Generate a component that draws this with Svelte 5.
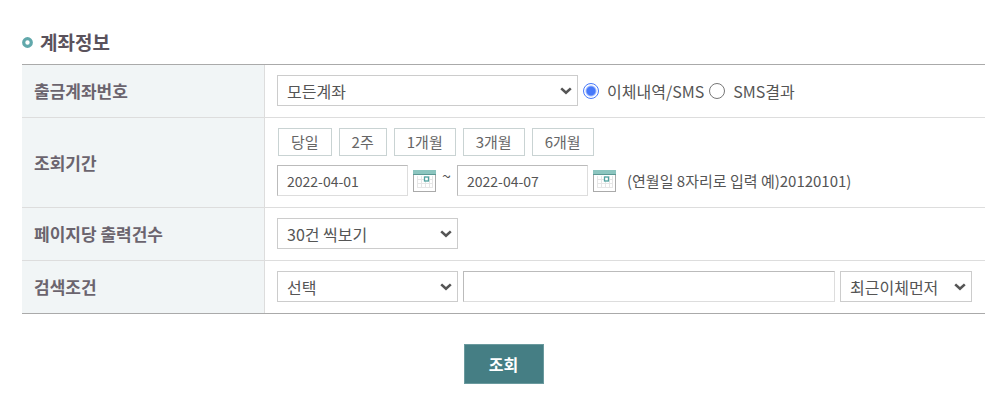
<script>
  // Account transfer lookup form: account, period, page size and search filters.
  const periods = ['당일', '2주', '1개월', '3개월', '6개월'];

  let account = $state('모든계좌');
  let resultType = $state('transfer');
  let startDate = $state('2022-04-01');
  let endDate = $state('2022-04-07');
  let pageSize = $state('30건 씩보기');
  let searchField = $state('선택');
  let keyword = $state('');
  let order = $state('최근이체먼저');
</script>

{#snippet chevron()}
  <svg class="chevron" viewBox="0 0 12 8" aria-hidden="true">
    <path d="M1.2 1.4 6 5.8l4.8-4.4" fill="none" stroke="#555" stroke-width="2.6" />
  </svg>
{/snippet}

{#snippet calendar(label)}
  <button type="button" class="calendar" aria-label={label}>
    <svg viewBox="0 0 23 22" aria-hidden="true">
      <rect x=".5" y=".5" width="22" height="21" fill="#fff" stroke="#aaa" />
      <path d="M4.5 6v12M8.5 6v12M12.5 6v12M16.5 6v12M19.5 6v12M4 9.5h16M4 13.5h16M4 17.5h16" stroke="#e6e6e6" />
      <rect width="23" height="4" fill="#8cc5bf" />
      <rect y="4" width="23" height="1" fill="#5c9994" />
      <rect x="11.5" y="7" width="4" height="4" fill="#fff" stroke="#4fa19f" stroke-width="1.3" />
    </svg>
  </button>
{/snippet}

<main>
  <h2>
    <svg class="bullet" viewBox="0 0 11 11" aria-hidden="true">
      <circle cx="5.5" cy="5.5" r="3.8" fill="none" stroke="#61a8ab" stroke-width="3.2" />
    </svg>
    계좌정보
  </h2>

  <form onsubmit={(event) => event.preventDefault()}>
    <table>
      <tbody>
        <tr>
          <th scope="row"><label for="account">출금계좌번호</label></th>
          <td>
            <div class="line">
              <span class="select wide">
                <select id="account" bind:value={account}>
                  <option>모든계좌</option>
                </select>
                {@render chevron()}
              </span>
              <label class="radio">
                <input type="radio" name="result" value="transfer" bind:group={resultType} />
                이체내역/SMS
              </label>
              <label class="radio">
                <input type="radio" name="result" value="sms" bind:group={resultType} />
                SMS결과
              </label>
            </div>
          </td>
        </tr>
        <tr>
          <th scope="row">조회기간</th>
          <td>
            <div class="periods">
              {#each periods as period}
                <button type="button" class="period">{period}</button>
              {/each}
            </div>
            <div class="line">
              <input class="text date" type="text" aria-label="조회 시작일" bind:value={startDate} />
              {@render calendar('시작일 선택')}
              <span class="tilde">~</span>
              <input class="text date" type="text" aria-label="조회 종료일" bind:value={endDate} />
              {@render calendar('종료일 선택')}
              <span class="hint">(연월일 8자리로 입력 예)20120101)</span>
            </div>
          </td>
        </tr>
        <tr>
          <th scope="row"><label for="page-size">페이지당 출력건수</label></th>
          <td>
            <span class="select medium">
              <select id="page-size" bind:value={pageSize}>
                <option>30건 씩보기</option>
              </select>
              {@render chevron()}
            </span>
          </td>
        </tr>
        <tr>
          <th scope="row"><label for="search-field">검색조건</label></th>
          <td>
            <div class="line">
              <span class="select medium">
                <select id="search-field" bind:value={searchField}>
                  <option>선택</option>
                </select>
                {@render chevron()}
              </span>
              <input class="text keyword" type="text" aria-label="검색어" bind:value={keyword} />
              <span class="select narrow">
                <select aria-label="정렬 순서" bind:value={order}>
                  <option>최근이체먼저</option>
                </select>
                {@render chevron()}
              </span>
            </div>
          </td>
        </tr>
      </tbody>
    </table>

    <button type="submit" class="submit">조회</button>
  </form>
</main>

<style>
  :global(body) {
    margin: 0;
    background: #fff;
  }

  main {
    padding: 28px 19px 20px 22px;
    color: #555;
    font-family: 'Noto Sans CJK KR', sans-serif;
    font-size: 16px;
    line-height: 20px;
  }

  input,
  select,
  button {
    box-sizing: border-box;
    margin: 0;
    color: inherit;
    font-family: inherit;
  }

  h2 {
    display: flex;
    align-items: center;
    gap: 7px;
    margin: 0 0 8px;
    color: #5a525c;
    font-size: 19px;
    font-weight: 700;
    line-height: 28px;
  }

  .bullet {
    width: 11px;
    height: 11px;
  }

  table {
    width: 100%;
    border-top: 1px solid #aaa;
    border-bottom: 1px solid #aaa;
    border-spacing: 0;
  }

  th,
  td {
    border-bottom: 1px solid #ddd;
  }

  tr:last-child > * {
    border-bottom: 0;
  }

  th {
    box-sizing: border-box;
    width: 243px;
    padding: 0 12px;
    border-right: 1px solid #ddd;
    background: #f1f5f6;
    color: #6b646e;
    font-size: 17px;
    font-weight: 700;
    text-align: left;
    white-space: nowrap;
  }

  td {
    padding: 10px 13px 11px 12px;
  }

  .line,
  .periods {
    display: flex;
    align-items: center;
    gap: 5px;
  }

  .periods {
    gap: 7px;
    margin-bottom: 9px;
    padding-left: 1px;
  }

  .period {
    height: 28px;
    padding: 0 12px;
    border: 1px solid #c9d3d3;
    background: #fff;
    color: #666;
    font-size: 15px;
    line-height: 20px;
  }

  .select {
    position: relative;
    display: block;
    flex: none;
  }

  .wide {
    width: 301px;
  }

  .medium {
    width: 181px;
  }

  .narrow {
    width: 132px;
  }

  select {
    display: block;
    width: 100%;
    height: 31px;
    padding: 0 20px 0 9px;
    border: 1px solid #ccc;
    border-radius: 0;
    background: #fff;
    font-size: 16px;
    appearance: none;
  }

  /* Drawn arrow laid over the native select */
  .chevron {
    position: absolute;
    top: 12px;
    right: 6px;
    width: 12px;
    height: 8px;
    pointer-events: none;
  }

  .radio {
    display: flex;
    align-items: center;
    gap: 8px;
    white-space: nowrap;
  }

  input[type='radio'] {
    width: 16px;
    height: 16px;
    border: 1px solid #777;
    border-radius: 50%;
    background: #fff;
    appearance: none;
  }

  input[type='radio']:checked {
    border-color: #4779fa;
    background: radial-gradient(circle, #4779fa 4px, #fff 6px);
  }

  .text {
    height: 31px;
    padding: 0 9px;
    border: 1px solid #ddd;
    border-top-color: #bbb;
    border-left-color: #bbb;
    border-radius: 0;
    background: #fff;
    font-size: 14px;
  }

  .date {
    width: 131px;
  }

  .keyword {
    flex: 1;
    min-width: 0;
  }

  .calendar {
    width: 23px;
    height: 22px;
    padding: 0;
    border: 0;
    background: none;
  }

  .calendar svg {
    display: block;
    width: 23px;
    height: 22px;
  }

  .tilde {
    align-self: flex-start;
    width: 11px;
    text-align: center;
  }

  .hint {
    margin-left: 6px;
    font-size: 15px;
    white-space: nowrap;
  }

  .submit {
    display: block;
    width: 80px;
    height: 40px;
    margin: 30px auto 0;
    border: 1px solid #6a9a9e;
    background: #457e84;
    color: #fff;
    font-size: 16px;
    font-weight: 700;
  }
</style>
